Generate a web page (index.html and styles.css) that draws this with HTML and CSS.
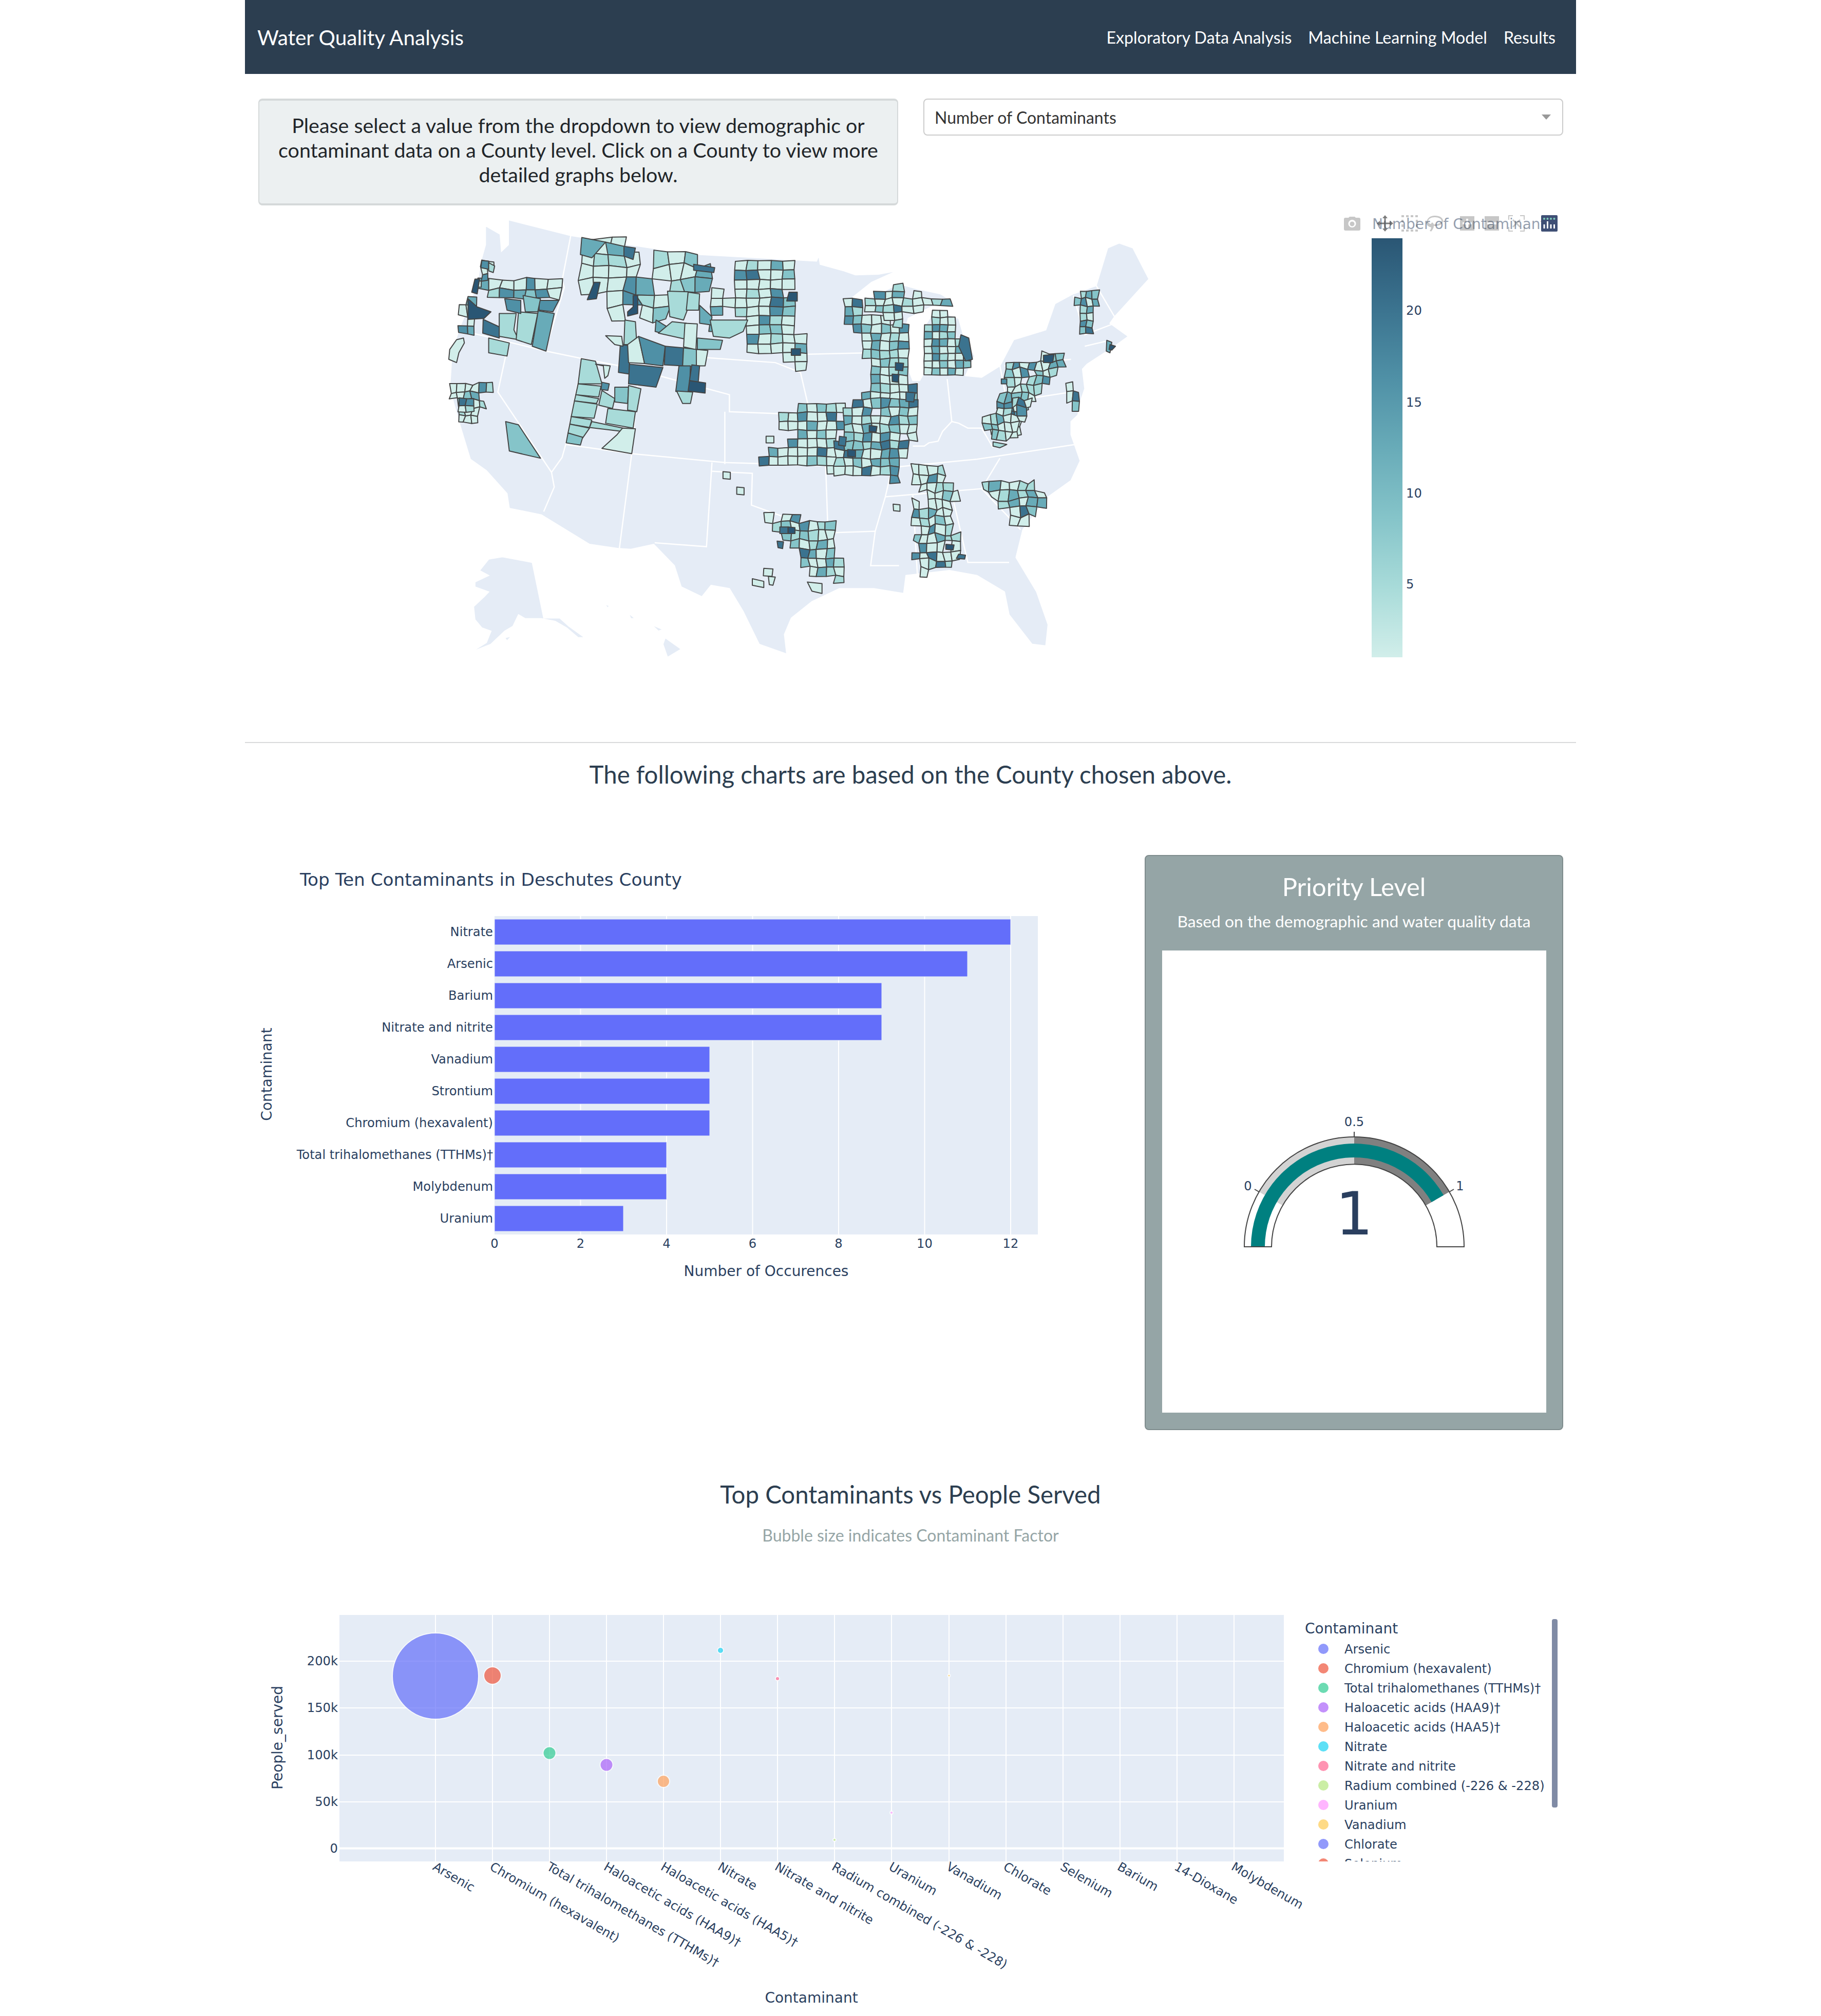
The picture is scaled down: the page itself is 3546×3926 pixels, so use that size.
FILE: index.html
```html
<!DOCTYPE html>
<html lang="en">
<head>
    <meta charset="UTF-8">
    <title>Water Quality Analysis</title>
    <link rel="stylesheet" href="styles.css">
</head>
<body>
    <div class="page">
        <nav class="navbar">
            <a class="brand">Water Quality Analysis</a>
            <div class="nav-links">
                <a class="nav-link">Exploratory Data Analysis</a>
                <a class="nav-link">Machine Learning Model</a>
                <a class="nav-link">Results</a>
            </div>
        </nav>

        <div class="top-row">
            <div class="info-box">Please select a value from the dropdown to view demographic or contaminant data on a County level. Click on a County to view more detailed graphs below.</div>
            <div class="dropdown">
                <span>Number of Contaminants</span>
                <span class="caret"></span>
            </div>
        </div>

        <svg class="chart map-chart" viewBox="477 400 2592 1045" width="2592" height="1045">
            <g transform="translate(840 400) scale(0.89286 0.63776)">
                <g id="land"></g>
                <g id="counties"></g>
            </g>
            <defs>
                <linearGradient id="tealScale" x1="0" y1="0" x2="0" y2="1">
                    <stop offset="0" stop-color="#2a5674"/>
                    <stop offset="0.167" stop-color="#3b738f"/>
                    <stop offset="0.333" stop-color="#4f90a6"/>
                    <stop offset="0.5" stop-color="#68abb8"/>
                    <stop offset="0.667" stop-color="#85c4c9"/>
                    <stop offset="0.833" stop-color="#a8dbd9"/>
                    <stop offset="1" stop-color="#d1eeea"/>
                </linearGradient>
            </defs>
            <rect x="2671" y="464" width="60" height="816" fill="url(#tealScale)"/>
            <text class="tick" x="2738" y="613">20</text>
            <text class="tick" x="2738" y="792">15</text>
            <text class="tick" x="2738" y="969">10</text>
            <text class="tick" x="2738" y="1146">5</text>
            <text class="axis-title" x="2672" y="446">Number of Contaminant</text>
            <rect x="2610" y="415" width="430" height="40" fill="#fff" fill-opacity="0.5"/>
            <!-- modebar -->
            <g class="mode-icon">
                <path fill-rule="evenodd" transform="translate(2617 419)" d="M9 5l2-2h10l2 2h6q3 0 3 3v19q0 3-3 3H3q-3 0-3-3V8q0-3 3-3z M16 9a7.500 7.500 0 1 0 .01 0z M16 12.500a4.500 4.500 0 1 1-.01 0z"/>
                <path class="mode-active" transform="translate(2681 419)" d="M16 0l5 6h-3.500v8.500H26V11l6 5-6 5v-3.500h-8.500V26H21l-5 6-5-6h3.500v-8.500H6V21l-6-5 6-5v3.500h8.500V6H11z"/>
                <path transform="translate(2729 419)" d="M0 0h5v4H0z M9 0h5v4H9z M18 0h5v4h-5z M27 0h5v4h-5z M0 9h4v5H0z M28 9h4v5h-4z M0 18h4v5H0z M28 18h4v5h-4z M0 28h5v4H0z M9 28h5v4H9z M18 28h5v4h-5z M27 28h5v4h-5z"/>
                <path fill-rule="evenodd" transform="translate(2777 419)" d="M17 1c9 0 16 4 16 10s-7 10-15 10c-1 0-2 0-3-.200 0 3-1 6-5 11l-3-1c2-3 3-5 3-7-5-1-9-4-9-8C1 6 8 1 17 1z M17 4C10 4 4 7 4 12c0 3 3 5 6 5 0-3 3-3 4-1l1 2c8 0 15-3 15-7s-6-7-13-7z"/>
                <path fill-rule="evenodd" transform="translate(2843 421)" d="M0 0h28v28H0z M12 5v7H5v4h7v7h4v-7h7v-4h-7V5z"/>
                <path fill-rule="evenodd" transform="translate(2891 421)" d="M0 0h28v28H0z M5 12v4h18v-4z"/>
                <path transform="translate(2937 419)" d="M0 0h9v2H2v7H0z M23 0h9v9h-2V2h-7z M0 23h2v7h7v2H0z M30 23h2v9h-9v-2h7z M10 8l6 6 6-6 2 2-6 6 6 6-2 2-6-6-6 6-2-2 6-6-6-6z"/>
            </g>
            <rect x="3001" y="419" width="32" height="32" rx="2" fill="#3f4f75"/>
            <g fill="#80cfbe">
                <circle cx="3007" cy="426" r="2"/><circle cx="3013.500" cy="426" r="2"/><circle cx="3020" cy="426" r="2"/><circle cx="3026.500" cy="426" r="2"/>
            </g>
            <g fill="#fff">
                <rect x="3005.500" y="437" width="3" height="8"/><rect x="3012" y="431" width="3" height="14"/><rect x="3018.500" y="437" width="3" height="8"/><rect x="3025" y="437" width="3" height="8"/>
            </g>
        </svg>

        <hr class="divider">
        <h3 class="section-title county-title">The following charts are based on the County chosen above.</h3>

        <div class="charts-row">
            <svg class="chart" viewBox="477 1665 1720 1120" width="1720" height="1120">
                <text class="plot-title" x="584" y="1725">Top Ten Contaminants in Deschutes County</text>
                <rect x="963" y="1784" width="1058" height="620" fill="#e5ecf6"/>
                <g stroke="#fff" stroke-width="2">
                    <path d="M1130.500 1784V2404M1298 1784V2404M1465.500 1784V2404M1633 1784V2404M1800.500 1784V2404M1968 1784V2404"/>
                </g>
                <g class="bars" fill="#636efa" stroke="#e5ecf6">
                    <rect x="963" y="1790" width="1005" height="50"/>
                    <rect x="963" y="1852" width="921" height="50"/>
                    <rect x="963" y="1914" width="754" height="50"/>
                    <rect x="963" y="1976" width="754" height="50"/>
                    <rect x="963" y="2038" width="419" height="50"/>
                    <rect x="963" y="2100" width="419" height="50"/>
                    <rect x="963" y="2162" width="419" height="50"/>
                    <rect x="963" y="2224" width="335" height="50"/>
                    <rect x="963" y="2286" width="335" height="50"/>
                    <rect x="963" y="2348" width="251" height="50"/>
                </g>
                <g class="tick tick-end">
                    <text x="960" y="1823">Nitrate</text>
                    <text x="960" y="1885">Arsenic</text>
                    <text x="960" y="1947">Barium</text>
                    <text x="960" y="2009">Nitrate and nitrite</text>
                    <text x="960" y="2071">Vanadium</text>
                    <text x="960" y="2133">Strontium</text>
                    <text x="960" y="2195">Chromium (hexavalent)</text>
                    <text x="960" y="2257">Total trihalomethanes (TTHMs)†</text>
                    <text x="960" y="2319">Molybdenum</text>
                    <text x="960" y="2381">Uranium</text>
                </g>
                <g class="tick tick-mid">
                    <text x="963" y="2430">0</text>
                    <text x="1130.500" y="2430">2</text>
                    <text x="1298" y="2430">4</text>
                    <text x="1465.500" y="2430">6</text>
                    <text x="1633" y="2430">8</text>
                    <text x="1800.500" y="2430">10</text>
                    <text x="1968" y="2430">12</text>
                </g>
                <text class="axis-title tick-mid" x="1492" y="2485">Number of Occurences</text>
                <text class="axis-title tick-mid" transform="translate(529 2092) rotate(-90)">Contaminant</text>
            </svg>

            <div class="card">
                <h4 class="card-title">Priority Level</h4>
                <p class="card-text">Based on the demographic and water quality data</p>
                <svg class="gauge" viewBox="2263 1851 748 900" width="748" height="900">
                    <path fill="#d3d3d3" d="M2451.700 2321A214 214 0 0 1 2637 2214V2267A161 161 0 0 0 2497.600 2347.500Z"/>
                    <path fill="#808080" d="M2637 2214A214 214 0 0 1 2822.300 2321L2776.400 2347.500A161 161 0 0 0 2637 2267Z"/>
                    <path fill="#008080" d="M2436 2428A201 201 0 0 1 2811.100 2327.500L2787.700 2341A174 174 0 0 0 2463 2428Z"/>
                    <path fill="none" stroke="#444" stroke-width="2" d="M2423 2428A214 214 0 0 1 2851 2428H2798A161 161 0 0 0 2476 2428Z"/>
                    <path fill="none" stroke="#444" stroke-width="2" d="M2451.700 2321L2443 2316M2637 2214V2204M2822.300 2321L2831 2316"/>
                    <g class="tick tick-mid">
                        <text x="2430" y="2318">0</text>
                        <text x="2637" y="2193">0.5</text>
                        <text x="2843" y="2318">1</text>
                    </g>
                    <text class="gauge-value" x="2637" y="2404">1</text>
                </svg>
            </div>
        </div>

        <h3 class="section-title bubble-title">Top Contaminants vs People Served</h3>
        <p class="bubble-sub">Bubble size indicates Contaminant Factor</p>

        <svg class="chart" viewBox="477 3100 2592 826" width="2592" height="826">
            <defs>
                <clipPath id="legendClip"><rect x="2530" y="3145" width="500" height="480"/></clipPath>
            </defs>
            <rect x="661" y="3145" width="1839" height="480" fill="#e5ecf6"/>
            <g stroke="#fff" stroke-width="2">
                <path d="M848 3145V3625M959 3145V3625M1070 3145V3625M1181 3145V3625M1292 3145V3625M1403 3145V3625M1514 3145V3625M1625 3145V3625M1736 3145V3625M1848 3145V3625M1959 3145V3625M2070 3145V3625M2181 3145V3625M2292 3145V3625M2403 3145V3625"/>
                <path d="M661 3235H2500M661 3326H2500M661 3418H2500M661 3509H2500"/>
                <path stroke-width="4" d="M661 3599.500H2500"/>
            </g>
            <g class="bubbles" stroke="#fff" stroke-width="2">
                <circle cx="848" cy="3264" r="84" fill="#636efa"/>
                <circle cx="959" cy="3263" r="17" fill="#ef553b"/>
                <circle cx="1070" cy="3414" r="12.500" fill="#2fcc92"/>
                <circle cx="1181" cy="3437" r="12.500" fill="#ab63fa"/>
                <circle cx="1292" cy="3469" r="12" fill="#ffa15a"/>
                <circle cx="1403" cy="3214" r="6" fill="#19d3f3"/>
                <circle cx="1514" cy="3269" r="4" fill="#ff6692"/>
                <circle cx="1625" cy="3583" r="3" fill="#b6e880"/>
                <circle cx="1736" cy="3530" r="3" fill="#ff97ff"/>
                <circle cx="1848" cy="3263" r="2.500" fill="#fecb52"/>
            </g>
            <g class="tick tick-end">
                <text x="658" y="3243">200k</text>
                <text x="658" y="3334">150k</text>
                <text x="658" y="3426">100k</text>
                <text x="658" y="3517">50k</text>
                <text x="658" y="3608">0</text>
            </g>
            <g class="tick">
                <text transform="translate(841 3640) rotate(30)">Arsenic</text>
                <text transform="translate(952 3640) rotate(30)">Chromium (hexavalent)</text>
                <text transform="translate(1063 3640) rotate(30)">Total trihalomethanes (TTHMs)†</text>
                <text transform="translate(1174 3640) rotate(30)">Haloacetic acids (HAA9)†</text>
                <text transform="translate(1285 3640) rotate(30)">Haloacetic acids (HAA5)†</text>
                <text transform="translate(1396 3640) rotate(30)">Nitrate</text>
                <text transform="translate(1507 3640) rotate(30)">Nitrate and nitrite</text>
                <text transform="translate(1618 3640) rotate(30)">Radium combined (-226 &amp; -228)</text>
                <text transform="translate(1729 3640) rotate(30)">Uranium</text>
                <text transform="translate(1841 3640) rotate(30)">Vanadium</text>
                <text transform="translate(1952 3640) rotate(30)">Chlorate</text>
                <text transform="translate(2063 3640) rotate(30)">Selenium</text>
                <text transform="translate(2174 3640) rotate(30)">Barium</text>
                <text transform="translate(2285 3640) rotate(30)">14-Dioxane</text>
                <text transform="translate(2396 3640) rotate(30)">Molybdenum</text>
            </g>
            <text class="axis-title tick-mid" x="1580" y="3900">Contaminant</text>
            <text class="axis-title tick-mid" transform="translate(550 3384) rotate(-90)">People_served</text>

            <text class="axis-title" x="2541" y="3181">Contaminant</text>
            <g clip-path="url(#legendClip)">
                <g class="bubbles">
                    <circle cx="2577" cy="3211" r="10" fill="#636efa"/>
                    <circle cx="2577" cy="3249" r="10" fill="#ef553b"/>
                    <circle cx="2577" cy="3287" r="10" fill="#2fcc92"/>
                    <circle cx="2577" cy="3325" r="10" fill="#ab63fa"/>
                    <circle cx="2577" cy="3363" r="10" fill="#ffa15a"/>
                    <circle cx="2577" cy="3401" r="10" fill="#19d3f3"/>
                    <circle cx="2577" cy="3439" r="10" fill="#ff6692"/>
                    <circle cx="2577" cy="3477" r="10" fill="#b6e880"/>
                    <circle cx="2577" cy="3515" r="10" fill="#ff97ff"/>
                    <circle cx="2577" cy="3553" r="10" fill="#fecb52"/>
                    <circle cx="2577" cy="3591" r="10" fill="#636efa"/>
                    <circle cx="2577" cy="3629" r="10" fill="#ef553b"/>
                </g>
                <g class="tick">
                    <text x="2618" y="3220">Arsenic</text>
                    <text x="2618" y="3258">Chromium (hexavalent)</text>
                    <text x="2618" y="3296">Total trihalomethanes (TTHMs)†</text>
                    <text x="2618" y="3334">Haloacetic acids (HAA9)†</text>
                    <text x="2618" y="3372">Haloacetic acids (HAA5)†</text>
                    <text x="2618" y="3410">Nitrate</text>
                    <text x="2618" y="3448">Nitrate and nitrite</text>
                    <text x="2618" y="3486">Radium combined (-226 &amp; -228)</text>
                    <text x="2618" y="3524">Uranium</text>
                    <text x="2618" y="3562">Vanadium</text>
                    <text x="2618" y="3600">Chlorate</text>
                    <text x="2618" y="3638">Selenium</text>
                </g>
            </g>
            <rect x="3022" y="3153" width="11" height="367" rx="4" fill="#808ba5"/>
        </svg>
    </div>
    <script src="map.js"></script>
</body>
</html>
```

FILE: styles.css
```css
* {
    box-sizing: border-box;
}
body {
    margin: 0;
    background-color: #fff;
    color: #212529;
    font-family: Lato, "Liberation Sans", sans-serif;
    font-size: 32px;
}
.page {
    width: 2592px;
    height: 3926px;
    margin: 0 auto;
    overflow: hidden;
}
.chart, .gauge {
    display: block;
}

/* navbar */
.navbar {
    display: flex;
    justify-content: space-between;
    align-items: center;
    height: 144px;
    padding: 0 24px;
    background-color: #2c3e50;
    color: #fff;
}
.brand {
    font-size: 40.5px;
}
.nav-links {
    display: flex;
    font-size: 32.2px;
}
.nav-link {
    padding: 0 16px;
}

/* top row */
.top-row {
    display: flex;
    justify-content: space-between;
    align-items: flex-start;
    height: 208px;
    margin-top: 48px;
    padding: 0 25px 0 26px;
}
.info-box {
    width: 1246px;
    height: 208px;
    padding: 24px 16px;
    border: 2px solid #d5d9da;
    border-top-width: 4px;
    border-bottom-width: 4px;
    border-radius: 8px;
    background-color: #ecf0f1;
    font-size: 39.4px;
    line-height: 48px;
    text-align: center;
}
.dropdown {
    display: flex;
    justify-content: space-between;
    align-items: center;
    width: 1246px;
    height: 72px;
    padding: 0 22px 0 20px;
    border: 2px solid #ccc;
    border-radius: 8px;
    color: #333;
}
.caret {
    width: 0;
    height: 0;
    border-top: 10px solid #999;
    border-left: 9px solid transparent;
    border-right: 9px solid transparent;
}

/* plotly-ish text */
.tick {
    font-family: "DejaVu Sans", sans-serif;
    font-size: 24.2px;
    fill: #2a3f5f;
}
.tick-end {
    text-anchor: end;
}
.tick-mid {
    text-anchor: middle;
}
.axis-title {
    font-family: "DejaVu Sans", sans-serif;
    font-size: 28px;
    fill: #2a3f5f;
}
.plot-title {
    font-family: "DejaVu Sans", sans-serif;
    font-size: 34.300px;
    fill: #2a3f5f;
}
.mode-icon {
    fill: rgba(68, 68, 68, 0.3);
}
.mode-active {
    fill: rgba(68, 68, 68, 0.7);
}
.bubbles {
    opacity: 0.7;
}

/* map shapes */
.land {
    fill: #e5ecf6;
    stroke: #fff;
    stroke-width: 2px;
    vector-effect: non-scaling-stroke;
}
.state-line {
    fill: none;
    stroke: #fff;
    stroke-width: 2.5px;
    vector-effect: non-scaling-stroke;
}
.county {
    stroke: #444;
    stroke-width: 2px;
    stroke-linejoin: round;
    vector-effect: non-scaling-stroke;
}

/* sections */
.divider {
    height: 2px;
    margin: 0;
    border: 0;
    background-color: #d8dadb;
}
.section-title {
    margin: 0;
    color: #2c3e50;
    font-size: 47.400px;
    font-weight: 400;
    line-height: 58px;
    text-align: center;
}
.county-title {
    padding-top: 32px;
    height: 218px;
}
.charts-row {
    display: flex;
    justify-content: space-between;
    padding-right: 25px;
}
.card {
    display: flex;
    flex-direction: column;
    align-items: center;
    width: 815px;
    height: 1120px;
    border: 2px solid #7f8c8d;
    border-radius: 8px;
    background-color: #95a5a6;
    color: #fff;
}
.card-title {
    margin: 30px 0 0;
    font-size: 48.800px;
    font-weight: 400;
    line-height: 58px;
}
.card-text {
    margin: 19px 0 0;
    font-size: 31.800px;
    line-height: 40px;
}
.gauge {
    margin-top: 37px;
    background-color: #fff;
}
.gauge-value {
    font-family: "DejaVu Sans", sans-serif;
    font-size: 115px;
    fill: #2a3f5f;
    text-anchor: middle;
}
.bubble-title {
    margin-top: 96px;
}
.bubble-sub {
    margin: 33px 0 0;
    color: #95a5a6;
    line-height: 36px;
    text-align: center;
    height: 128px;
}
```

FILE: map.js
```js
// rough county map, coordinates follow a 1568 x 1568 drawing box
const NS = 'http://www.w3.org/2000/svg';
const palette = ['#d1eeea', '#a8dbd9', '#85c4c9', '#68abb8', '#4f90a6', '#3b738f', '#2a5674'];

const outline = '118,62 150,88 153,140 168,120 168,44 304,92 560,148 840,170 845,153 848,180 900,200 925,212 975,210 1015,200 960,235 915,285 950,285 1020,240 1060,255 1110,270 1140,295 1090,310 1040,345 1030,400 1035,480 1050,535 1065,535 1075,510 1080,440 1075,370 1100,318 1150,345 1160,395 1185,460 1165,520 1200,525 1240,490 1270,410 1340,380 1360,300 1400,270 1450,245 1475,130 1500,115 1530,130 1565,225 1490,340 1480,360 1520,400 1490,430 1430,485 1420,500 1425,560 1415,600 1410,640 1395,660 1395,700 1415,780 1395,840 1345,890 1290,990 1275,1075 1320,1180 1345,1280 1340,1345 1310,1340 1260,1250 1250,1180 1190,1130 1130,1115 1035,1130 1030,1185 965,1170 890,1170 830,1210 785,1260 770,1310 775,1370 715,1340 680,1240 650,1170 610,1160 590,1195 545,1165 530,1100 485,1035 435,1050 410,1048 345,1035 240,945 170,925 165,880 120,810 85,775 60,660 40,560 45,450 60,380 100,240 108,170 118,120';
const alaska = '125,1080 155,1073 220,1090 245,1260 280,1260 300,1285 335,1320 320,1320 295,1290 270,1270 240,1262 205,1262 190,1250 178,1285 160,1300 130,1340 85,1365 120,1335 130,1300 110,1290 95,1265 92,1225 115,1195 125,1180 95,1165 95,1150 125,1130 105,1115';
const hawaii = ['510,1320 545,1355 515,1380 505,1340', '430,1245 445,1262 435,1262', '480,1280 505,1295 495,1300', '378,1218 388,1222 385,1230', '160,1320 175,1315 165,1330'];

const stateLines = [
    '304,92 285,230 290,250 248,445',
    '60,380 250,445 330,468 430,495 650,578 650,630 830,640',
    '162,460 145,570 262,815 268,860 245,935',
    '330,468 293,730 285,770 262,815',
    '293,730 437,758 640,785 860,795 1005,800 1190,775 1405,730',
    '450,540 437,758 410,1048',
    '612,785 600,1042 487,1030',
    '612,812 700,818 698,915 865,1000 968,995 958,1100 1020,1100',
    '640,630 640,790',
    '860,795 865,1000',
    '1005,800 990,890 968,995',
    '990,890 1200,865 1240,772',
    '1050,885 1060,1130',
    '1135,880 1170,1090 1260,1090',
    '1200,865 1285,990',
    '1050,735 1075,735 1085,725 1105,720 1115,690 1135,660 1150,665 1170,680 1200,680 1225,740',
    '1125,530 1135,660',
    '1060,540 1060,680',
    '800,455 960,450',
    '600,465 750,480 805,510 825,630',
    '1240,490 1255,600 1395,570',
    '1250,490 1395,470',
    '1400,275 1425,395 1490,360',
    '1425,430 1470,415',
    '1450,245 1490,340'
];

// polygon, cell width, cell height, chance to skip, colour spread (higher is paler), corner jitter
const regions = [
    ['100,225 290,240 292,268 270,292 200,275 100,268', 26, 30, 0.03, 3, 0.35],
    ['60,330 88,280 88,345 112,392 60,378', 18, 28, 0.03, 1.4, 0.4],
    ['110,170 138,180 128,205 108,250 95,250', 14, 20, 0.1, 2.4, 0.4],
    ['42,545 145,550 110,580 125,660 95,675 60,650 45,570', 15, 24, 0.2, 3, 0.5],
    ['325,100 445,128 620,160 618,300 580,260 520,250 515,340 450,350 430,320 395,345 360,290 340,285 325,150', 32, 42, 0.1, 2.6, 0.45],
    ['665,175 790,170 797,290 805,360 808,500 780,490 770,470 700,440 680,455 680,430 700,400 700,350 610,330 610,250 650,285 660,240', 26, 28, 0.1, 4.5, 0.2],
    ['905,285 935,285 940,320 1035,375 1030,420 1050,540 1058,600 940,610 955,560 970,530 950,470 940,400 900,350', 20, 26, 0.04, 1.9, 0.25],
    ['745,635 830,610 900,605 880,820 860,820 855,795 800,795 715,790 715,770 770,730 770,690 745,660', 21, 27, 0.06, 3, 0.15],
    ['900,605 960,600 1058,590 1060,700 1030,760 1010,840 980,815 880,820', 20, 26, 0.03, 1.6, 0.3],
    ['1075,380 1100,320 1150,345 1150,395 1180,470 1165,515 1075,530', 17, 22, 0, 3, 0.12],
    ['945,285 1020,240 1060,265 1140,295 1090,305 1040,330 1025,370 950,320', 21, 22, 0.05, 5, 0.35],
    ['1403,280 1452,262 1447,340 1440,390 1420,390 1415,340', 13, 22, 0, 1.5, 0.4],
    ['1262,480 1380,450 1390,480 1350,530 1330,580 1300,600 1280,690 1230,700 1205,680 1240,620 1250,510', 16, 25, 0.08, 1.5, 0.55],
    ['1215,640 1290,590 1305,600 1280,705 1240,712 1205,690', 15, 25, 0.05, 2, 0.55],
    ['728,940 880,970 880,1050 895,1095 890,1145 830,1130 800,1060 785,1030 758,1000 745,970', 19, 27, 0.02, 1.8, 0.35],
    ['1050,795 1115,795 1135,870 1165,870 1130,920 1140,1000 1155,1060 1160,1085 1065,1130 1055,1060 1055,910 1090,900 1050,860', 17, 26, 0.15, 2.5, 0.5],
    ['1200,860 1250,845 1310,850 1345,885 1320,945 1285,995 1255,950 1245,900 1225,905', 20, 26, 0.04, 1.7, 0.55],
    ['1385,560 1400,540 1415,625 1395,630', 14, 30, 0, 1.6, 0.3],
    ['60,600 90,590 90,630 65,625', 16, 20, 0, 1.5, 0.3]
];

// the big counties, [colour, points]
const counties = [
    [6, '80,285 100,310 130,325 115,345 80,348'],
    [5, '113,348 150,372 148,405 112,390'],
    [1, '148,330 185,330 180,380 190,410 148,400'],
    [1, '190,325 232,330 218,425 185,410'],
    [3, '233,322 268,330 250,445 220,430'],
    [4, '235,290 278,290 265,325 235,320'],
    [2, '200,275 238,285 232,325 205,325'],
    [4, '160,285 195,290 195,330 165,320'],
    [6, '95,225 105,225 100,270 88,265'],
    [4, '110,168 125,170 125,195 108,190'],
    [1, '125,175 138,185 135,205 125,200'],
    [0, '70,405 72,420 60,450 55,480 38,470 40,440 55,410'],
    [1, '125,405 170,420 165,460 125,450'],
    [2, '162,660 190,670 238,772 170,750'],
    [3, '328,98 380,112 350,160 325,150'],
    [5, '420,125 445,130 440,165 420,155'],
    [3, '380,112 420,125 420,155 385,150'],
    [6, '355,235 368,235 360,285 340,288'],
    [6, '440,275 450,275 450,330 428,338 428,325 440,310'],
    [5, '572,180 618,190 616,205 572,198'],
    // wyoming and around
    [1, '422,350 445,355 448,425 420,425'],
    [5, '412,425 432,428 432,515 408,510'],
    [0, '428,425 452,400 465,483 430,480'],
    [4, '452,400 510,430 505,490 465,483'],
    [5, '432,485 505,495 490,555 430,545'],
    [5, '510,430 550,435 548,490 508,487'],
    [2, '550,435 580,440 578,495 548,490'],
    [0, '578,440 603,443 597,490 578,490'],
    [4, '540,490 565,490 563,570 533,568'],
    [5, '568,487 585,490 582,540 563,535'],
    [6, '563,535 598,542 597,573 560,567'],
    [1, '535,567 570,570 565,605 548,605'],
    [3, '490,350 525,380 515,395 488,385'],
    [1, '525,355 556,360 553,408 495,390'],
    [0, '553,360 580,362 577,440 550,432'],
    [3, '608,355 636,360 632,385 605,385'],
    [2, '580,405 635,412 630,440 580,440'],
    [1, '515,262 560,264 558,320 550,350 520,340'],
    [1, '560,265 585,270 583,320 556,320'],
    [3, '585,305 612,340 610,365 585,360'],
    [1, '608,350 690,350 680,385 650,405 615,400'],
    // utah and arizona strip
    [1, '327,468 358,476 372,545 320,545'],
    [1, '320,545 370,552 365,585 315,578'],
    [1, '315,578 365,590 360,605 312,597'],
    [1, '312,597 362,607 355,650 305,645'],
    [1, '305,645 350,655 345,678 302,668'],
    [1, '302,668 345,680 330,710 298,695'],
    [2, '298,695 330,708 325,732 294,725'],
    [1, '350,660 418,680 415,690 345,678'],
    [0, '417,680 445,682 437,758 372,742 405,700'],
    [1, '385,620 445,630 440,680 380,665'],
    [2, '400,555 430,555 428,605 400,600'],
    [1, '430,550 457,560 448,630 428,625'],
    [4, '372,540 388,545 385,565 370,562'],
    [1, '372,565 400,590 395,620 365,610'],
    [0, '358,485 390,490 385,520 378,528 375,490'],
    [0, '380,398 415,400 418,430 400,425'],
    // loose boxes
    [0, '636,813 652,815 652,836 636,834'],
    [0, '666,860 682,862 682,884 666,882'],
    [0, '730,705 747,705 747,725 730,725'],
    [0, '725,1108 745,1110 743,1133 724,1131'],
    [0, '700,1140 725,1148 725,1167 700,1160'],
    [0, '735,1133 750,1135 745,1160 737,1158'],
    [0, '820,1150 852,1155 852,1185 830,1178'],
    [5, '754,1025 768,1027 766,1048 756,1045'],
    [0, '1007,912 1022,914 1022,934 1008,932'],
    [1, '1225,722 1255,730 1240,740 1225,735'],
    [4, '1243,530 1255,530 1255,545 1243,545'],
    [3, '1473,412 1484,418 1480,450 1472,445'],
    [6, '1480,425 1492,430 1484,442 1478,440'],
    [5, '1150,1065 1165,1068 1163,1080 1145,1078'],
    [6, '780,265 798,265 798,292 775,292'],
    [6, '785,438 805,438 805,458 785,458'],
    [5, '1155,395 1172,405 1180,470 1165,475 1150,430'],
    [6, '1335,458 1358,455 1355,480 1335,480'],
    [5, '760,982 778,982 778,1002 760,1002'],
    [6, '778,982 793,984 793,1002 778,1002'],
    [6, '908,745 925,748 925,768 908,766'],
    [6, '1012,480 1030,482 1028,505 1012,503'],
    [5, '1035,570 1055,572 1052,600 1035,598'],
    [6, '955,672 972,675 970,692 955,690'],
    [5, '890,705 905,708 903,735 888,732'],
    [6, '1122,1035 1140,1037 1138,1052 1122,1050'],
    [6, '1005,515 1020,517 1018,540 1005,538']
];

let seed = 1234567;
function rnd() {
    seed = (seed * 16807) % 2147483647;
    return seed / 2147483647;
}

function parsePoints(str) {
    return str.split(' ').map(p => p.split(',').map(Number));
}

function inside(pt, poly) {
    let hit = false;
    for (let i = 0, j = poly.length - 1; i < poly.length; j = i++) {
        const a = poly[i], b = poly[j];
        if ((a[1] > pt[1]) !== (b[1] > pt[1]) &&
            pt[0] < (b[0] - a[0]) * (pt[1] - a[1]) / (b[1] - a[1]) + a[0]) {
            hit = !hit;
        }
    }
    return hit;
}

function addShape(parent, tag, cls, attrs) {
    const el = document.createElementNS(NS, tag);
    el.setAttribute('class', cls);
    for (const k in attrs) el.setAttribute(k, attrs[k]);
    parent.appendChild(el);
}

// cells share jittered corners so the grid reads as county borders
function fillRegion(parent, [pts, cw, ch, skip, spread, jitter]) {
    const poly = parsePoints(pts);
    const xs = poly.map(p => p[0]), ys = poly.map(p => p[1]);
    const x0 = Math.min(...xs), y0 = Math.min(...ys);
    const cols = Math.ceil((Math.max(...xs) - x0) / cw);
    const rows = Math.ceil((Math.max(...ys) - y0) / ch);
    const grid = [];
    for (let r = 0; r <= rows; r++) {
        grid.push([]);
        for (let c = 0; c <= cols; c++) {
            grid[r].push([x0 + c * cw + (rnd() - 0.5) * cw * jitter, y0 + r * ch + (rnd() - 0.5) * ch * jitter]);
        }
    }
    for (let r = 0; r < rows; r++) {
        for (let c = 0; c < cols; c++) {
            const center = [x0 + (c + 0.5) * cw, y0 + (r + 0.5) * ch];
            if (!inside(center, poly) || rnd() < skip) continue;
            const a = grid[r][c], b = grid[r][c + 1], d = grid[r + 1][c + 1], e = grid[r + 1][c];
            // the darkest shades come from the hand placed list below
            const idx = Math.floor(5.4 * Math.pow(rnd(), spread));
            addShape(parent, 'polygon', 'county', {
                points: [a, b, d, e].map(p => p.map(v => v.toFixed(1)).join(',')).join(' '),
                fill: palette[idx]
            });
        }
    }
}

const landGroup = document.getElementById('land');
const countyGroup = document.getElementById('counties');

[outline, alaska, ...hawaii].forEach(p => addShape(landGroup, 'polygon', 'land', { points: p }));
stateLines.forEach(p => addShape(landGroup, 'polyline', 'state-line', { points: p }));
regions.forEach(r => fillRegion(countyGroup, r));
counties.forEach(([c, p]) => addShape(countyGroup, 'polygon', 'county', { points: p, fill: palette[c] }));
```
